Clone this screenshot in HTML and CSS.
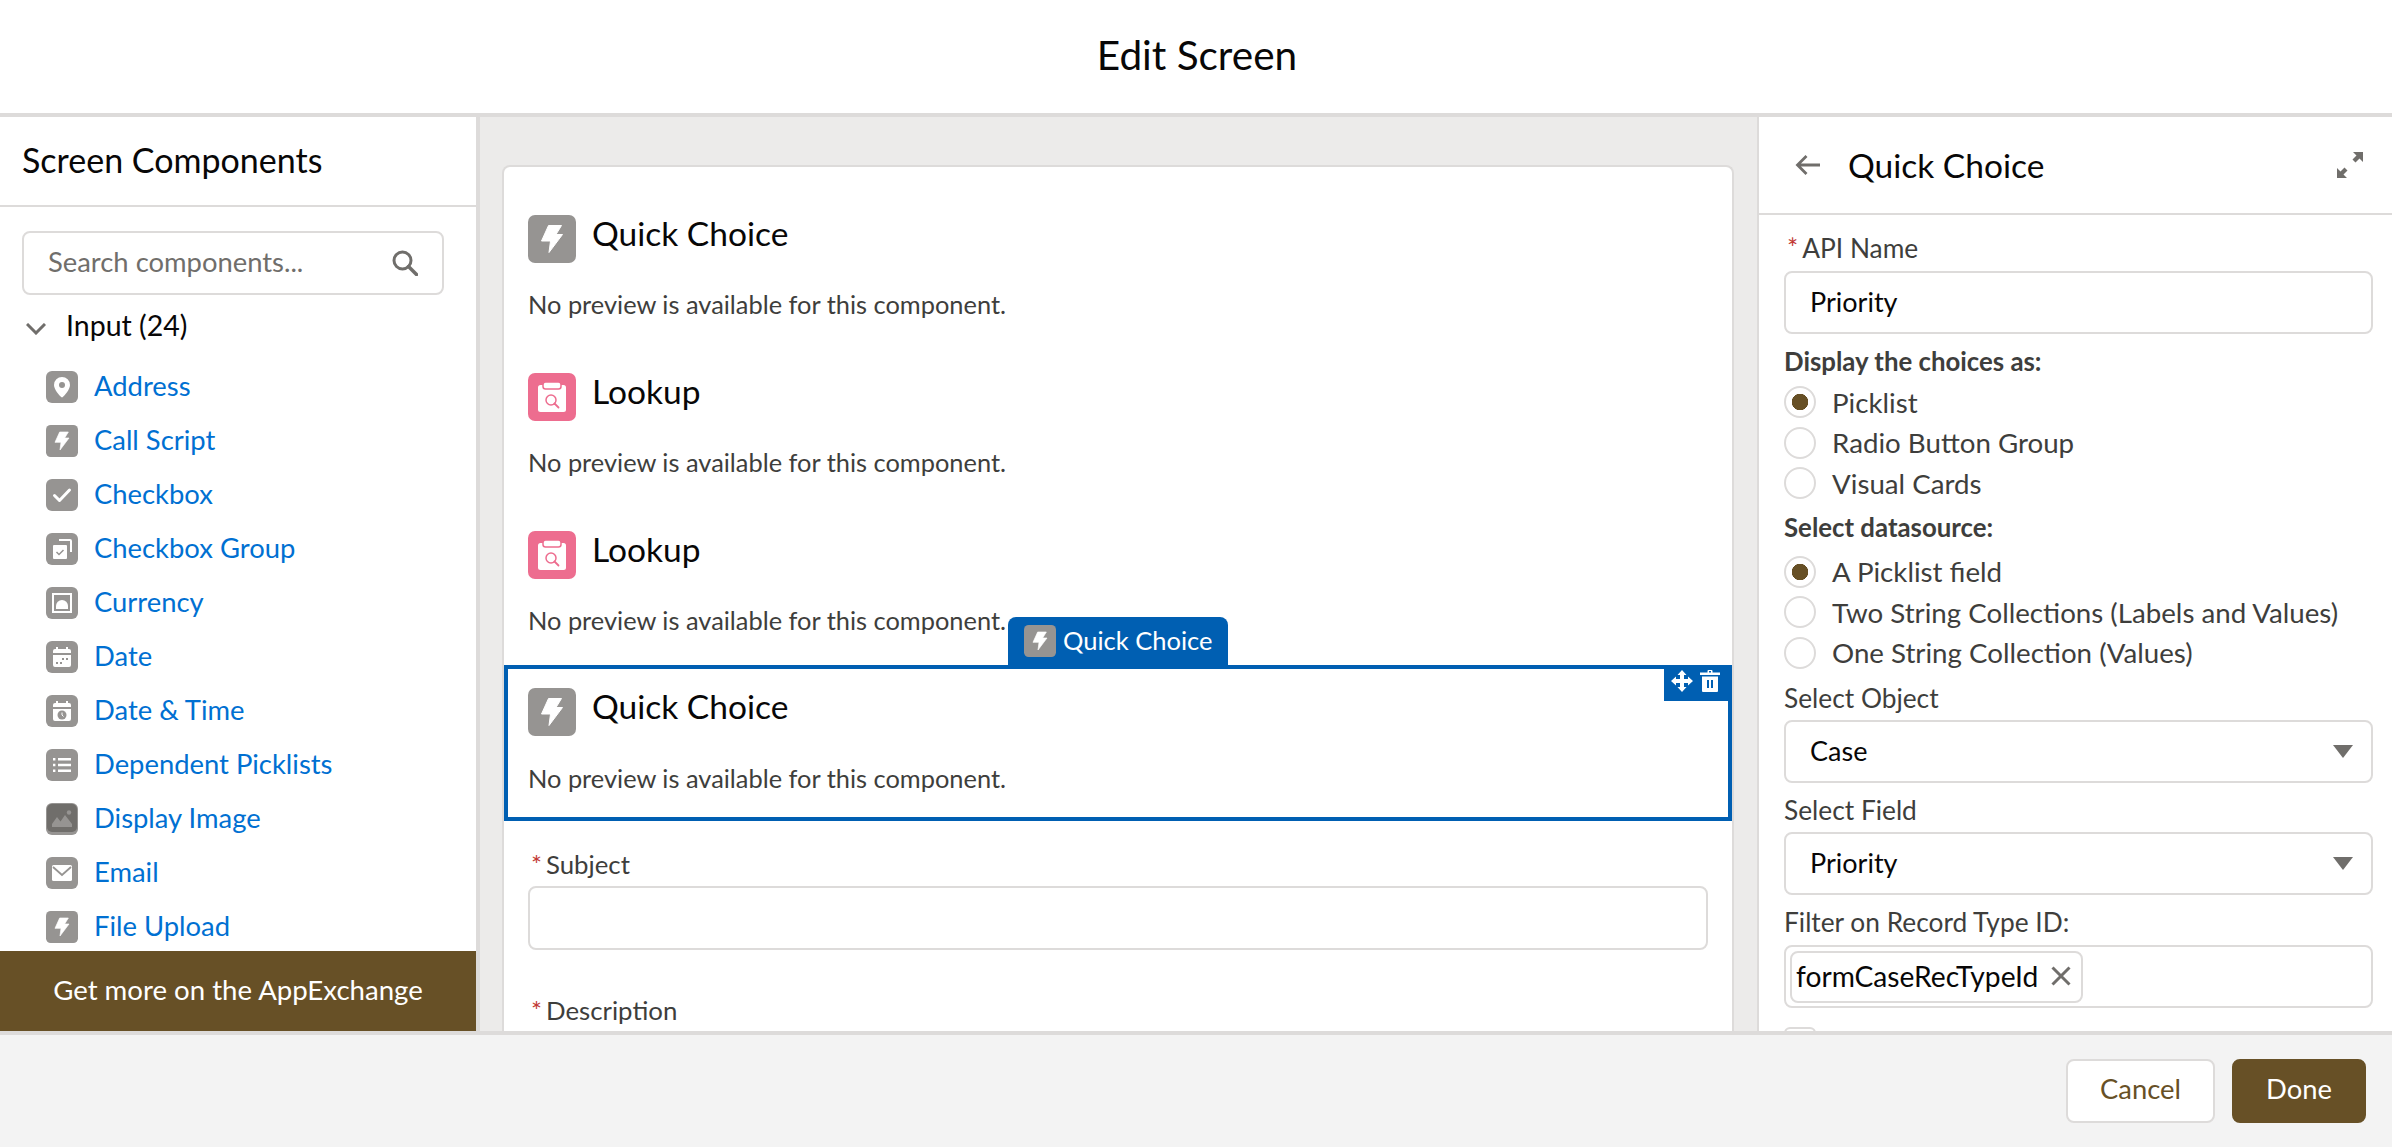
FILE: index.html
```html
<!DOCTYPE html>
<html lang="en">
<head>
    <meta charset="UTF-8">
    <title>Edit Screen</title>
    <link rel="stylesheet" href="styles.css">
</head>
<body>
    <svg class="defs" width="0" height="0">
        <symbol id="i-bolt" viewBox="0 0 48 48">
            <rect width="48" height="48" rx="7" fill="#969492"/>
            <path d="M20.500 10.500h13l-5.500 9h6.500L21 37.500l1.500-11.500h-9z" fill="#fff" stroke="#fff" stroke-width="1" stroke-linejoin="round"/>
        </symbol>
        <symbol id="i-lookup" viewBox="0 0 48 48">
            <rect width="48" height="48" rx="7" fill="#ed6d8f"/>
            <rect x="10" y="12" width="28" height="27" rx="2.500" fill="#fff"/>
            <rect x="15" y="9" width="18" height="7" rx="2.500" fill="#fff" stroke="#ed6d8f" stroke-width="1.500"/>
            <circle cx="23" cy="27" r="5" fill="none" stroke="#ed6d8f" stroke-width="1.500"/>
            <path d="M26.500 30.500l4 4" stroke="#ed6d8f" stroke-width="1.800" stroke-linecap="round"/>
        </symbol>
        <symbol id="i-pin" viewBox="0 0 32 32">
            <rect width="32" height="32" rx="6" fill="#969492"/>
            <path d="M16 6a8 8 0 0 0-8 8c0 4.500 5.500 10.500 7.200 12a1.100 1.100 0 0 0 1.600 0C18.500 24.500 24 18.500 24 14a8 8 0 0 0-8-8z" fill="#fff"/>
            <circle cx="16" cy="14" r="3" fill="#969492"/>
        </symbol>
        <symbol id="i-check" viewBox="0 0 32 32">
            <rect width="32" height="32" rx="6" fill="#969492"/>
            <path d="M8.500 16.500l5 5 10-10.500" fill="none" stroke="#fff" stroke-width="3" stroke-linecap="round" stroke-linejoin="round"/>
        </symbol>
        <symbol id="i-checks" viewBox="0 0 32 32">
            <rect width="32" height="32" rx="6" fill="#969492"/>
            <path d="M13 7h11a1 1 0 0 1 1 1v11" fill="none" stroke="#fff" stroke-width="2"/>
            <rect x="7" y="12" width="14" height="14" rx="1" fill="#fff"/>
            <path d="M10.500 19l2.500 2.500 4.500-4.500" fill="none" stroke="#969492" stroke-width="1.500"/>
        </symbol>
        <symbol id="i-currency" viewBox="0 0 32 32">
            <rect width="32" height="32" rx="6" fill="#969492"/>
            <rect x="7" y="7" width="18" height="18" fill="none" stroke="#fff" stroke-width="2"/>
            <path d="M10 22v-3a6 6 0 0 1 12 0v3z" fill="#fff"/>
        </symbol>
        <symbol id="i-date" viewBox="0 0 32 32">
            <rect width="32" height="32" rx="6" fill="#969492"/>
            <path d="M7 10a2 2 0 0 1 2-2h14a2 2 0 0 1 2 2v2H7zM7 14h18v10a2 2 0 0 1-2 2H9a2 2 0 0 1-2-2z" fill="#fff"/>
            <path d="M11 6v3M21 6v3" stroke="#fff" stroke-width="2"/>
            <path d="M16 17h2v2h-2zM20 17h2v2h-2zM10 21h2v2h-2zM14 21h2v2h-2z" fill="#969492"/>
        </symbol>
        <symbol id="i-datetime" viewBox="0 0 32 32">
            <rect width="32" height="32" rx="6" fill="#969492"/>
            <path d="M7 10a2 2 0 0 1 2-2h14a2 2 0 0 1 2 2v2H7zM7 14h18v10a2 2 0 0 1-2 2H9a2 2 0 0 1-2-2z" fill="#fff"/>
            <path d="M11 6v3M21 6v3" stroke="#fff" stroke-width="2"/>
            <circle cx="16" cy="20" r="4.500" fill="#969492"/>
            <path d="M16 17.500V20l1.500 1.500" fill="none" stroke="#fff" stroke-width="1"/>
        </symbol>
        <symbol id="i-list" viewBox="0 0 32 32">
            <rect width="32" height="32" rx="6" fill="#969492"/>
            <path d="M12 9h13v2.400H12zM12 14.800h13v2.400H12zM12 20.600h13v2.400H12zM7 9h2.400v2.400H7zM7 14.800h2.400v2.400H7zM7 20.600h2.400v2.400H7z" fill="#fff"/>
        </symbol>
        <symbol id="i-image" viewBox="0 0 32 32">
            <rect width="32" height="32" rx="6" fill="#969492"/>
            <rect x="1" y="1" width="30" height="28" rx="5" fill="#706e6b"/>
            <path d="M6 24v-3l5-7 3.500 4.500L19 12l7 9v3z" fill="#969492"/>
            <circle cx="23" cy="9.500" r="2.200" fill="#969492"/>
        </symbol>
        <symbol id="i-mail" viewBox="0 0 32 32">
            <rect width="32" height="32" rx="6" fill="#969492"/>
            <rect x="6" y="8" width="20" height="16" rx="1.500" fill="#fff"/>
            <path d="M7 10l9 8 9-8" fill="none" stroke="#969492" stroke-width="1.800"/>
        </symbol>
    </svg>

    <header class="top-bar">Edit Screen</header>

    <main class="workspace">
        <!-- left palette -->
        <aside class="palette">
            <h2 class="palette-title">Screen Components</h2>
            <div class="palette-scroll">
                <div class="search">
                    <input class="search-input" type="text" placeholder="Search components...">
                    <svg class="search-icon" viewBox="0 0 26 26"><circle cx="10.500" cy="10.500" r="8.500" fill="none" stroke="#706e6b" stroke-width="3"/><path d="M16.500 16.500l8 8" stroke="#706e6b" stroke-width="3.500" stroke-linecap="round"/></svg>
                </div>
                <div class="group-row">
                    <svg class="chevron" viewBox="0 0 20 12"><path d="M1 1l9 9 9-9" fill="none" stroke="#706e6b" stroke-width="3"/></svg>
                    <span>Input (24)</span>
                </div>
                <ul class="comp-list">
                    <li><svg class="tile"><use href="#i-pin"/></svg><a>Address</a></li>
                    <li><svg class="tile"><use href="#i-bolt"/></svg><a>Call Script</a></li>
                    <li><svg class="tile"><use href="#i-check"/></svg><a>Checkbox</a></li>
                    <li><svg class="tile"><use href="#i-checks"/></svg><a>Checkbox Group</a></li>
                    <li><svg class="tile"><use href="#i-currency"/></svg><a>Currency</a></li>
                    <li><svg class="tile"><use href="#i-date"/></svg><a>Date</a></li>
                    <li><svg class="tile"><use href="#i-datetime"/></svg><a>Date &amp; Time</a></li>
                    <li><svg class="tile"><use href="#i-list"/></svg><a>Dependent Picklists</a></li>
                    <li><svg class="tile"><use href="#i-image"/></svg><a>Display Image</a></li>
                    <li><svg class="tile"><use href="#i-mail"/></svg><a>Email</a></li>
                    <li><svg class="tile"><use href="#i-bolt"/></svg><a>File Upload</a></li>
                </ul>
            </div>
            <div class="appexchange">Get more on the AppExchange</div>
        </aside>

        <!-- canvas -->
        <section class="canvas">
            <div class="card">
                <div class="comp comp-first">
                    <div class="comp-head"><svg class="tile-lg"><use href="#i-bolt"/></svg><span>Quick Choice</span></div>
                    <p class="comp-note">No preview is available for this component.</p>
                </div>
                <div class="comp">
                    <div class="comp-head"><svg class="tile-lg"><use href="#i-lookup"/></svg><span>Lookup</span></div>
                    <p class="comp-note">No preview is available for this component.</p>
                </div>
                <div class="comp">
                    <div class="comp-head"><svg class="tile-lg"><use href="#i-lookup"/></svg><span>Lookup</span></div>
                    <p class="comp-note">No preview is available for this component.</p>
                </div>
                <div class="comp comp-selected">
                    <div class="comp-tag"><svg class="tile"><use href="#i-bolt"/></svg><span>Quick Choice</span></div>
                    <div class="comp-tools">
                        <svg class="tool" viewBox="0 0 22 22"><path d="M11 0l4.500 5H13v4h4V6.500l5 4.500-5 4.500V13h-4v4h2.500L11 22l-4.500-5H9v-4H5v2.500L0 11l5-4.500V9h4V5H6.500z" fill="#fff"/></svg>
                        <svg class="tool tool-trash" viewBox="0 0 20 22"><path d="M7.500 2.500V1a1 1 0 0 1 1-1h3a1 1 0 0 1 1 1v1.500H20V5H0V2.500zM9 1v1.500h2V1zM2 6.500h16V21a1 1 0 0 1-1 1H3a1 1 0 0 1-1-1zM7 10v8h2v-8zM11 10v8h2v-8z" fill="#fff" fill-rule="evenodd"/></svg>
                    </div>
                    <div class="comp-head"><svg class="tile-lg"><use href="#i-bolt"/></svg><span>Quick Choice</span></div>
                    <p class="comp-note">No preview is available for this component.</p>
                </div>
                <div class="form-part">
                    <label class="form-label"><span class="req">*</span>Subject</label>
                    <input class="text-input" type="text">
                    <label class="form-label form-label-next"><span class="req">*</span>Description</label>
                </div>
            </div>
        </section>

        <!-- right properties -->
        <aside class="props">
            <div class="props-head">
                <svg class="back" viewBox="0 0 26 22"><path d="M25 11H3M11.500 2L2.500 11l9 9" fill="none" stroke="#706e6b" stroke-width="2.800"/></svg>
                <h2>Quick Choice</h2>
                <svg class="expand" viewBox="0 0 26 26"><path d="M16 0h10v10l-3.500-3.500-4 4-3-3 4-4zM0 16l3.500 3.500 4-4 3 3-4 4L10 26H0z" fill="#706e6b"/></svg>
            </div>
            <div class="props-body">
                <label class="prop-label first"><span class="req">*</span>API Name</label>
                <div class="prop-input">Priority</div>

                <div class="prop-heading gap-a">Display the choices as:</div>
                <div class="radios">
                    <div class="radio on"><i></i>Picklist</div>
                    <div class="radio"><i></i>Radio Button Group</div>
                    <div class="radio"><i></i>Visual Cards</div>
                </div>

                <div class="prop-heading gap-b">Select datasource:</div>
                <div class="radios radios-b">
                    <div class="radio on"><i></i>A Picklist field</div>
                    <div class="radio"><i></i>Two String Collections (Labels and Values)</div>
                    <div class="radio"><i></i>One String Collection (Values)</div>
                </div>

                <label class="prop-label gap-c">Select Object</label>
                <div class="prop-select">Case<b></b></div>

                <label class="prop-label gap-d">Select Field</label>
                <div class="prop-select">Priority<b></b></div>

                <label class="prop-label gap-d">Filter on Record Type ID:</label>
                <div class="prop-pills">
                    <span class="pill">formCaseRecTypeId
                        <svg viewBox="0 0 20 20"><path d="M1.500 1.500l17 17M18.500 1.500l-17 17" stroke="#706e6b" stroke-width="3"/></svg>
                    </span>
                </div>
                <div class="prop-check"></div>
            </div>
        </aside>
    </main>

    <footer class="bottom-bar">
        <button class="btn">Cancel</button>
        <button class="btn btn-brand">Done</button>
    </footer>
</body>
</html>
```

FILE: styles.css
```css
* {
    box-sizing: border-box;
}

html, body {
    height: 100%;
}

body {
    margin: 0;
    display: flex;
    flex-direction: column;
    overflow: hidden;
    background: #fff;
    color: #080707;
    font-family: Lato, "Open Sans", sans-serif;
    font-size: 27.400px;
}

.defs {
    position: absolute;
}

h2, p, ul {
    margin: 0;
    padding: 0;
    font-weight: 400;
}

.top-bar {
    height: 117px;
    flex: none;
    display: flex;
    align-items: center;
    justify-content: center;
    border-bottom: 4px solid #dddbda;
    font-size: 40.500px;
    padding: 0 0 4px 2px;
}

.workspace {
    flex: 1;
    min-height: 0;
    display: flex;
}

/* left palette */
.palette {
    width: 480px;
    flex: none;
    display: flex;
    flex-direction: column;
    border-right: 4px solid #dddbda;
}

.palette-title {
    height: 90px;
    flex: none;
    padding: 0 0 3px 22px;
    display: flex;
    align-items: center;
    border-bottom: 2px solid #dddbda;
    font-size: 34px;
}

.palette-scroll {
    flex: 1;
    min-height: 0;
    overflow: hidden;
}

.search {
    position: relative;
    margin: 24px 32px 0 22px;
}

.search-input {
    width: 100%;
    height: 64px;
    padding: 0 80px 3px 24px;
    border: 2px solid #dddbda;
    border-radius: 8px;
    font: inherit;
}

.search-input::placeholder {
    color: #706e6b;
}

.search-icon {
    position: absolute;
    right: 26px;
    top: 19px;
    width: 26px;
    height: 26px;
}

.group-row {
    height: 46px;
    margin-top: 8px;
    padding: 0 0 3px 26px;
    display: flex;
    align-items: center;
    gap: 20px;
    font-size: 28.500px;
}

.chevron {
    width: 20px;
    height: 12px;
    margin-top: 9px;
}

.comp-list {
    list-style: none;
    margin-top: 11px;
    padding-left: 46px;
}

.comp-list li {
    height: 54px;
    display: flex;
    align-items: center;
    gap: 16px;
}

.comp-list a {
    padding-bottom: 3px;
    color: #0070d2;
}

.tile {
    width: 32px;
    height: 32px;
    flex: none;
}

.tile-lg {
    width: 48px;
    height: 48px;
    flex: none;
}

.appexchange {
    height: 80px;
    flex: none;
    padding-bottom: 3px;
    display: flex;
    align-items: center;
    justify-content: center;
    background: #675026;
    color: #fff;
    font-size: 27.600px;
}

/* canvas */
.canvas {
    flex: 1;
    min-width: 0;
    overflow: hidden;
    padding: 48px 23px 0 22px;
    background: #ecebea;
}

.card {
    height: 100%;
    overflow: hidden;
    padding-top: 25px;
    background: #fff;
    border: 2px solid #dddbda;
    border-bottom: 0;
    border-radius: 8px 8px 0 0;
}

.comp {
    position: relative;
    height: 158px;
    padding: 23px 24px 0;
}

.comp-head {
    display: flex;
    gap: 16px;
    font-size: 33.500px;
    line-height: 36px;
}

.comp-note {
    margin-top: 25px;
    color: #3e3e3c;
    font-size: 25.400px;
    line-height: 32px;
}

.comp-selected {
    height: 156px;
    margin-top: -1px;
    padding: 19px 20px 0;
    border: 4px solid #005fb2;
}

.comp-selected .comp-note {
    margin-top: 26px;
}

.comp-tag {
    position: absolute;
    left: 500px;
    top: -52px;
    width: 220px;
    height: 48px;
    padding-left: 16px;
    display: flex;
    align-items: center;
    gap: 7px;
    background: #005fb2;
    border-radius: 8px 8px 0 0;
    color: #fff;
    font-size: 25.500px;
}

.comp-tag span {
    padding-bottom: 2px;
}

.comp-tools {
    position: absolute;
    right: 0;
    top: 0;
    width: 64px;
    height: 32px;
    padding: 1px 8px 0 7px;
    display: flex;
    gap: 7px;
    background: #005fb2;
}

.tool {
    width: 22px;
    height: 22px;
}

.tool-trash {
    width: 20px;
}

.form-part {
    padding: 28px 24px 0;
}

.form-label {
    display: block;
    margin-bottom: 6px;
    color: #3e3e3c;
    font-size: 25.800px;
    line-height: 31px;
}

.form-label-next {
    margin-top: 45px;
}

.req {
    margin: 0 4px 0 3px;
    color: #c23934;
}

.text-input {
    display: block;
    width: 100%;
    height: 64px;
    border: 2px solid #dddbda;
    border-radius: 8px;
}

/* right properties */
.props {
    width: 635px;
    flex: none;
    overflow: hidden;
    border-left: 2px solid #dddbda;
}

.props-head {
    height: 98px;
    padding: 0 29px 0 36px;
    display: flex;
    align-items: center;
    border-bottom: 2px solid #dddbda;
}

.props-head h2 {
    flex: 1;
    margin-left: 27px;
    font-size: 33.500px;
}

.back {
    width: 26px;
    height: 22px;
}

.expand {
    width: 26px;
    height: 26px;
}

.props-body {
    padding: 0 19px 0 25px;
    color: #3e3e3c;
    font-size: 26px;
}

.prop-label,
.prop-heading {
    display: block;
    line-height: 32px;
}

.prop-label {
    margin-bottom: 6px;
    font-size: 26.300px;
}

.prop-heading {
    font-size: 25.800px;
    font-weight: 700;
}

.prop-label.first {
    margin-top: 17px;
    margin-bottom: 7px;
}

.gap-a {
    margin-top: 11px;
}

.gap-b {
    margin-top: 7px;
}

.gap-c {
    margin-top: 9px;
}

.gap-d {
    margin-top: 11px;
}

.prop-input,
.prop-select,
.prop-pills {
    display: flex;
    align-items: center;
    width: 100%;
    height: 63px;
    padding: 0 24px 3px 24px;
    border: 2px solid #dddbda;
    border-radius: 8px;
    color: #080707;
    font-size: 27px;
}

.prop-select {
    justify-content: space-between;
}

.prop-select b {
    width: 0;
    height: 0;
    margin: 3px -6px 0 0;
    border-left: 10.500px solid transparent;
    border-right: 10.500px solid transparent;
    border-top: 13px solid #706e6b;
}

.radios {
    margin-top: 5px;
}

.radios-b {
    margin-top: 9px;
}

.radio {
    height: 40.500px;
    display: flex;
    align-items: center;
    gap: 16px;
    font-size: 27.700px;
}

.radio i {
    width: 32px;
    height: 32px;
    flex: none;
    border: 2px solid #dddbda;
    border-radius: 50%;
}

.radio.on i {
    background: radial-gradient(circle, #675026 0, #675026 8px, #fff 8.500px);
}

.prop-pills {
    margin-top: 7px;
    padding: 0 4px;
}

.pill {
    width: 293px;
    height: 52px;
    padding: 0 10px 2px 4px;
    display: flex;
    align-items: center;
    justify-content: space-between;
    border: 2px solid #dddbda;
    border-radius: 8px;
    font-size: 28.200px;
}

.pill svg {
    width: 20px;
    height: 20px;
}

.prop-check {
    width: 32px;
    height: 32px;
    margin-top: 19px;
    border: 2px solid #dddbda;
    border-radius: 6px;
}

.bottom-bar {
    height: 116px;
    flex: none;
    padding: 24px 26px 0 0;
    display: flex;
    justify-content: flex-end;
    gap: 17px;
    background: #f3f3f3;
    border-top: 4px solid #dddbda;
}

.btn {
    width: 149px;
    height: 64px;
    padding: 0 0 6px;
    border: 2px solid #dddbda;
    border-radius: 8px;
    background: #fff;
    color: #675026;
    font: inherit;
}

.btn-brand {
    width: 134px;
    background: #675026;
    border-color: #675026;
    color: #fff;
}
```
